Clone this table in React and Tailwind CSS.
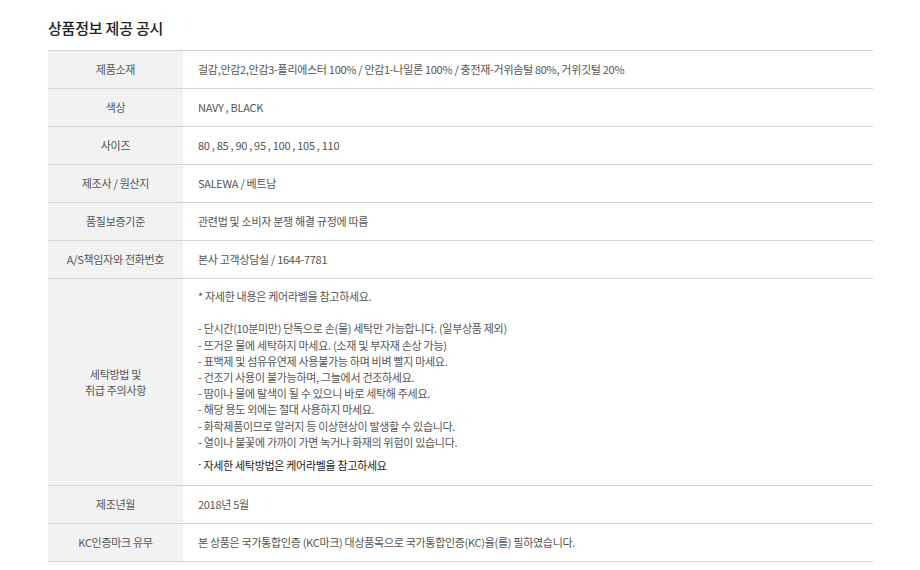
const rows = [
  { label: '제품소재', value: '걸감,안감2,안감3-폴리에스터 100% / 안감1-나일론 100% / 충전재-거위솜털 80%, 거위깃털 20%' },
  { label: '색상', value: 'NAVY , BLACK' },
  { label: '사이즈', value: '80 , 85 , 90 , 95 , 100 , 105 , 110' },
  { label: '제조사 / 원산지', value: 'SALEWA / 베트남' },
  { label: '품질보증기준', value: '관련법 및 소비자 분쟁 해결 규정에 따름' },
  { label: 'A/S책임자와 전화번호', value: '본사 고객상담실 / 1644-7781' },
];

const careLines = [
  '* 자세한 내용은 케어라벨을 참고하세요.',
  '',
  '- 단시간(10분미만) 단독으로 손(물) 세탁만 가능합니다. (일부상품 제외)',
  '- 뜨거운 물에 세탁하지 마세요. (소재 및 부자재 손상 가능)',
  '- 표백제 및 섬유유연제 사용불가능 하며 비벼 빨지 마세요.',
  '- 건조기 사용이 불가능하며, 그늘에서 건조하세요.',
  '- 땀이나 물에 탈색이 될 수 있으니 바로 세탁해 주세요.',
  '- 해당 용도 외에는 절대 사용하지 마세요.',
  '- 화학제품이므로 알러지 등 이상현상이 발생할 수 있습니다.',
  '- 열이나 불꽃에 가까이 가면 녹거나 화재의 위험이 있습니다.',
];

const tail = [
  { label: '제조년월', value: '2018년 5월' },
  { label: 'KC인증마크 유무', value: '본 상품은 국가통합인증 (KC마크) 대상품목으로 국가통합인증(KC)을(를) 필하였습니다.' },
];

function Row({ label, value }) {
  return (
    <div className="grid grid-cols-[135px_1fr] h-[38px] border-t border-[#d4d4d4]">
      <div className="bg-[#f2f2f2] flex items-center justify-center text-[#555]">{label}</div>
      <div className="flex items-center pl-[15px] text-[#555]">{value}</div>
    </div>
  );
}

export default function App() {
  return (
    <div
      className="bg-white min-h-[570px] pl-[48px] pr-[47px] text-[11px] tracking-[-0.3px]"
      style={{ fontFamily: '"Noto Sans CJK KR", "Noto Sans", sans-serif' }}
    >
      <h2 className="pt-[18px] text-[15px] leading-[20px] font-medium text-[#222] tracking-[-0.2px]">상품정보 제공 공시</h2>

      <div className="mt-[12px] border-b border-[#d4d4d4]">
        {rows.map((r) => (
          <Row key={r.label} {...r} />
        ))}

        {/* care instructions */}
        <div className="grid grid-cols-[135px_1fr] border-t border-[#d4d4d4]">
          <div className="bg-[#f2f2f2] flex flex-col items-center justify-center text-[#555] leading-[16px]">
            <span>세탁방법 및</span>
            <span>취급 주의사항</span>
          </div>
          <div className="pl-[15px] pt-[9px] pb-[12px] text-[#555]">
            {careLines.map((line, i) => (
              <p key={i} className="h-[16.2px] leading-[16.2px]">{line}</p>
            ))}
            <p className="mt-[7px] leading-[16px] text-[11px] text-[#222]">ˑ 자세한 세탁방법은 케어라벨을 참고하세요</p>
          </div>
        </div>

        {tail.map((r) => (
          <Row key={r.label} {...r} />
        ))}
      </div>
    </div>
  );
}
